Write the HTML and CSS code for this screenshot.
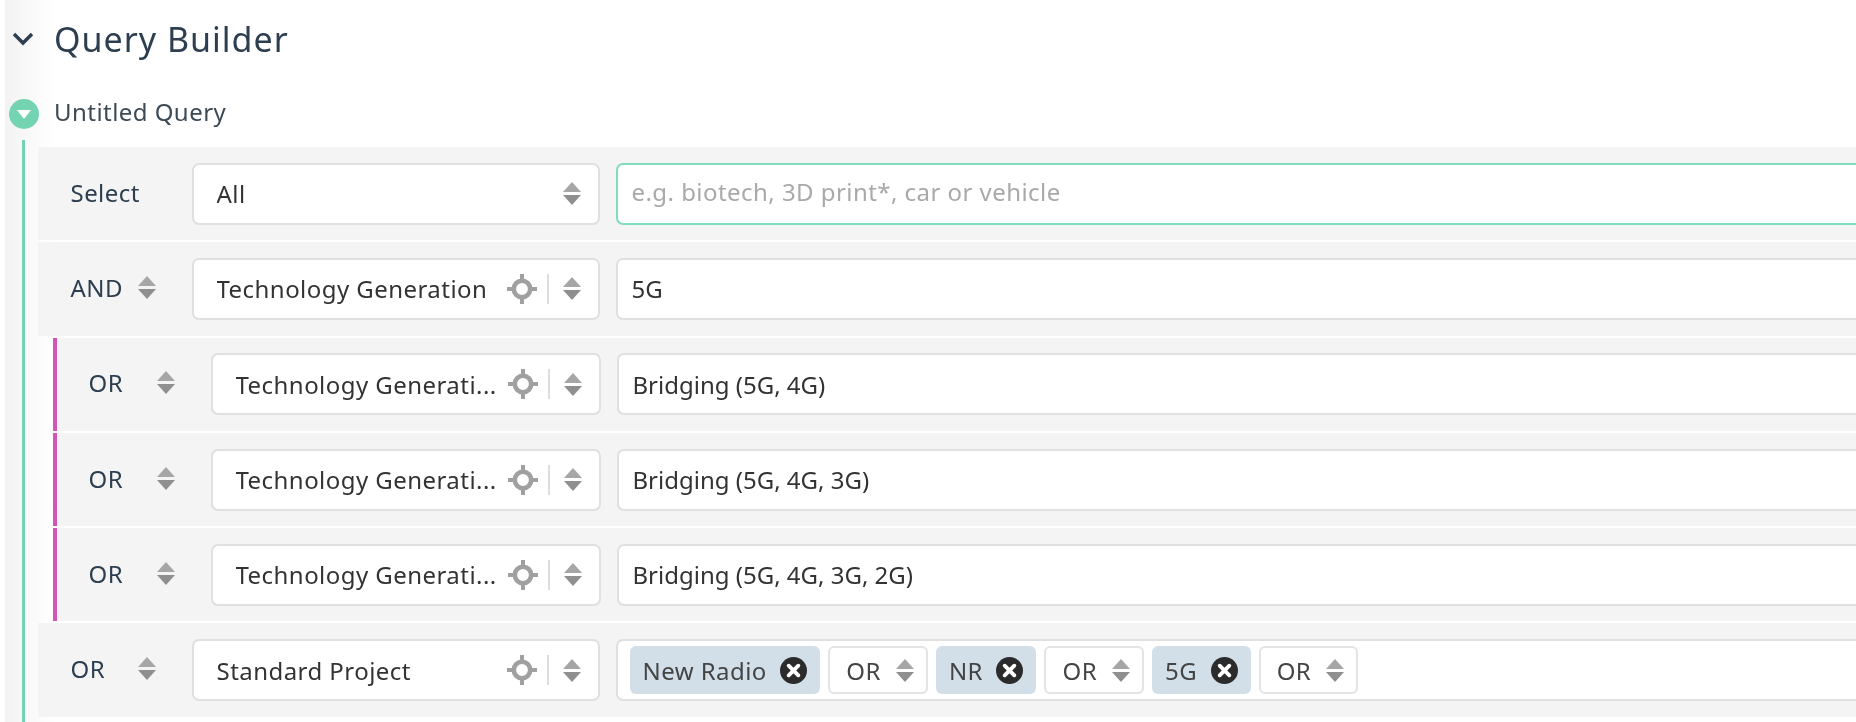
FILE: index.html
```html
<!DOCTYPE html>
<html lang="en">
<head>
<meta charset="utf-8">
<title>Query Builder</title>
<link rel="stylesheet" href="styles.css">
</head>
<body>
<svg class="defs" width="0" height="0" aria-hidden="true">
  <symbol id="sort" viewBox="0 0 18 23"><path d="M9 0 18 10H0Z" fill="#a6a6a6"/><path d="M0 13H18L9 23Z" fill="#8f8f8f"/></symbol>
  <symbol id="target" viewBox="0 0 30 30"><g fill="none" stroke="#a0a0a0"><circle cx="15" cy="15" r="8.2" stroke-width="4.6"/><path d="M15 0V8M15 22V30M0 15H8M22 15H30" stroke-width="4"/></g></symbol>
  <symbol id="clear" viewBox="0 0 28 28"><circle cx="14" cy="14" r="14" fill="#2b2b2b"/><path d="M9 9 19 19M19 9 9 19" stroke="#fff" stroke-width="4" stroke-linecap="round"/></symbol>
</svg>
<main class="page">
  <header class="section-head">
    <svg class="chevron" viewBox="0 0 22 14"><path d="M2 2 11 11 20 2" fill="none" stroke="#2c3e50" stroke-width="3.4"/></svg>
    <h1 class="title">Query Builder</h1>
  </header>
  <div class="query-head">
    <span class="toggle"><svg viewBox="0 0 14 9"><path d="M0 0H14L7 9Z" fill="#fff"/></svg></span>
    <span class="query-name">Untitled Query</span>
  </div>
  <div class="tree">
    <div class="row">
      <div class="op"><span>Select</span></div>
      <div class="field"><span class="field-text">All</span><svg class="sort"><use href="#sort"/></svg></div>
      <div class="value focused"><span class="placeholder">e.g. biotech, 3D print*, car or vehicle</span></div>
    </div>
    <div class="row">
      <div class="op"><span>AND</span><svg class="sort"><use href="#sort"/></svg></div>
      <div class="field"><span class="field-text">Technology Generation</span><svg class="target"><use href="#target"/></svg><i class="sep"></i><svg class="sort"><use href="#sort"/></svg></div>
      <div class="value"><span class="value-text">5G</span></div>
    </div>
    <div class="row nested">
      <div class="op"><span>OR</span><svg class="sort"><use href="#sort"/></svg></div>
      <div class="field"><span class="field-text">Technology Generati...</span><svg class="target"><use href="#target"/></svg><i class="sep"></i><svg class="sort"><use href="#sort"/></svg></div>
      <div class="value"><span class="value-text">Bridging (5G, 4G)</span></div>
    </div>
    <div class="row nested">
      <div class="op"><span>OR</span><svg class="sort"><use href="#sort"/></svg></div>
      <div class="field"><span class="field-text">Technology Generati...</span><svg class="target"><use href="#target"/></svg><i class="sep"></i><svg class="sort"><use href="#sort"/></svg></div>
      <div class="value"><span class="value-text">Bridging (5G, 4G, 3G)</span></div>
    </div>
    <div class="row nested">
      <div class="op"><span>OR</span><svg class="sort"><use href="#sort"/></svg></div>
      <div class="field"><span class="field-text">Technology Generati...</span><svg class="target"><use href="#target"/></svg><i class="sep"></i><svg class="sort"><use href="#sort"/></svg></div>
      <div class="value"><span class="value-text">Bridging (5G, 4G, 3G, 2G)</span></div>
    </div>
    <div class="row">
      <div class="op"><span>OR</span><svg class="sort"><use href="#sort"/></svg></div>
      <div class="field"><span class="field-text">Standard Project</span><svg class="target"><use href="#target"/></svg><i class="sep"></i><svg class="sort"><use href="#sort"/></svg></div>
      <div class="value tags">
        <span class="tag">New Radio<svg class="clear"><use href="#clear"/></svg></span>
        <span class="joiner">OR<svg class="sort"><use href="#sort"/></svg></span>
        <span class="tag">NR<svg class="clear"><use href="#clear"/></svg></span>
        <span class="joiner">OR<svg class="sort"><use href="#sort"/></svg></span>
        <span class="tag">5G<svg class="clear"><use href="#clear"/></svg></span>
        <span class="joiner">OR<svg class="sort"><use href="#sort"/></svg></span>
      </div>
    </div>
  </div>
</main>
</body>
</html>
```
FILE: styles.css
```css
* { box-sizing: border-box; }
html, body { margin: 0; height: 100%; background: #fff; overflow: hidden; }
.defs { position: absolute; }
.page {
  height: 722px;
  margin-left: 5px;
  padding-top: 3px;
  display: flex;
  flex-direction: column;
  font-family: "Noto Sans", sans-serif;
  font-size: 24px;
  letter-spacing: .45px;
  color: #333;
  background: linear-gradient(90deg, #f3f3f3 0, #fff 50px);
  filter: blur(.5px);
}
.section-head { height: 72px; display: flex; align-items: center; }
.chevron { width: 22px; height: 14px; margin-left: 7px; flex: none; }
.title { margin: 0 0 0 20px; font-size: 34px; font-weight: 400; letter-spacing: 1px; color: #2c3e50; }
.query-head { height: 65px; display: flex; align-items: center; padding-top: 8px; }
.toggle {
  width: 30px; height: 30px; margin: 5px 0 0 4px; border-radius: 50%;
  background: #74d3b1; display: flex; align-items: center; justify-content: center; flex: none;
}
.toggle svg { width: 14px; height: 9px; }
.query-name { margin-left: 15px; color: #3c4a56; }
.tree {
  flex: 1;
  margin-left: 17px;
  border-left: 3.5px solid #74d3b1;
  padding-top: 7px;
  padding-left: 13px;
  display: flex;
  flex-direction: column;
  gap: 2px;
}
.row {
  height: 93.3px;
  background: #f4f4f4;
  display: flex;
  align-items: center;
  padding-left: 32.5px;
  flex: none;
}
.row.nested { margin-left: 14.5px; border-left: 4px solid #d455b8; padding-left: 32px; }
.op { width: 121px; flex: none; display: flex; align-items: center; color: #2c3e50; padding-bottom: 3px; }
.row.nested .op { width: 122px; }
.op > span { width: 67px; }
.row.nested .op > span { width: 68px; }
.sort { width: 18px; height: 23px; flex: none; display: block; }
.field, .value { height: 62px; background: #fff; border: 2px solid #e0e0e0; border-radius: 7px; display: flex; align-items: center; }
.field { width: 408px; flex: none; padding: 0 17px 0 23px; }
.row.nested .field { width: 390px; }
.field-text { flex: 1; white-space: nowrap; overflow: hidden; }
.target { width: 30px; height: 30px; flex: none; }
.sep { width: 2px; height: 30px; background: #ddd; margin: 0 14px 0 10px; flex: none; }
.value { flex: 1; margin-left: 16px; margin-right: -20px; padding-left: 14px; min-width: 0; }
.value-text { letter-spacing: 0; }
.value.focused { border-color: #7fdcbc; }
.placeholder { color: #a9a9a9; padding-bottom: 4px; }
.tags { gap: 8px; padding-left: 12px; }
.tag { height: 48px; padding: 0 13px; background: #d3dfe8; border-radius: 6px; display: flex; align-items: center; gap: 13.5px; color: #444; }
.clear { width: 27px; height: 27px; flex: none; }
.joiner { height: 48px; padding: 0 12px 0 16px; border: 2px solid #e4e4e4; border-radius: 6px; display: flex; align-items: center; gap: 15px; color: #444; }
```
